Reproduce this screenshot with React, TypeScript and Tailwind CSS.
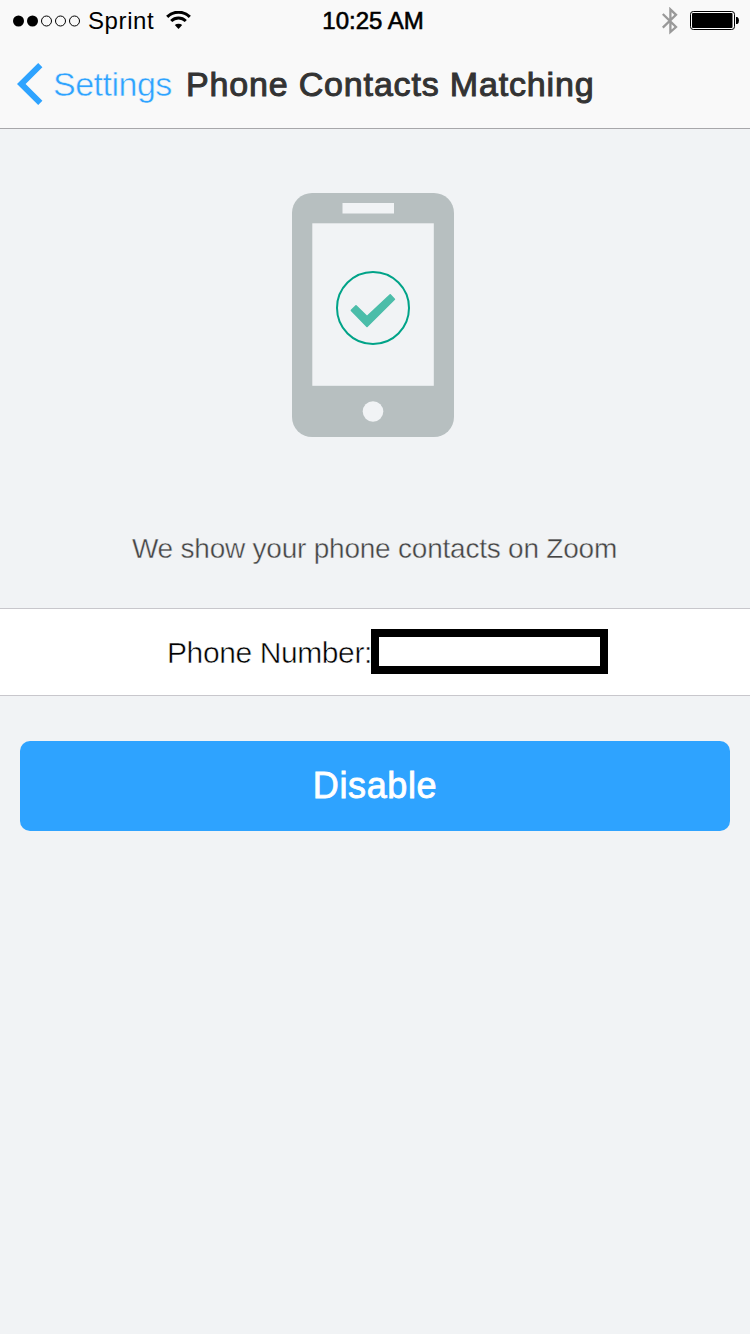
const signal = [true, true, false, false, false];

function SignalDots() {
  return (
    <svg width="68" height="12" viewBox="0 0 68 12" className="mt-px shrink-0">
      {signal.map((on, i) => (
        <circle
          key={i}
          cx={5.5 + i * 14}
          cy="6"
          r={on ? 5.5 : 5}
          fill={on ? '#000' : 'none'}
          stroke={on ? 'none' : '#000'}
          strokeWidth="1"
        />
      ))}
    </svg>
  );
}

function WifiIcon() {
  return (
    <svg width="25" height="18" viewBox="0 0 25 18" className="shrink-0" fill="none" stroke="#000">
      <path d="M1.2 5.9a16 16 0 0 1 22.6 0" strokeWidth="3.1" />
      <path d="M5.2 10.1a10.3 10.3 0 0 1 14.6 0" strokeWidth="2.9" />
      <path d="M8.8 14.1a5.4 5.4 0 0 1 7.4 0L12.5 18z" fill="#000" stroke="none" />
    </svg>
  );
}

function BluetoothIcon() {
  return (
    <svg width="16" height="28" viewBox="0 0 16 28" className="mt-px shrink-0">
      <path d="M.8 7L14 20 8.4 25V2.4L14 7.8.8 20.6" fill="none" stroke="#999" strokeWidth="2.3" />
    </svg>
  );
}

function BatteryIcon() {
  return (
    <svg width="49" height="19" viewBox="0 0 49 19" className="shrink-0">
      <rect x=".5" y=".5" width="44" height="18" rx="2.8" fill="#fff" stroke="#000" />
      <rect x="2" y="2" width="40.5" height="15" rx="1" />
      <path d="M46 6h1.4q1.6 1 1.6 3.5T47.4 13H46z" />
    </svg>
  );
}

function StatusBar() {
  return (
    <div className="grid h-10 grid-cols-3 items-center pl-[13px] pr-[11px] text-2xl leading-[38px] text-black">
      <div className="flex items-center">
        <SignalDots />
        <span className="ml-[7px] pt-[2px] tracking-[0.6px]">Sprint</span>
        <span className="ml-3 flex">
          <WifiIcon />
        </span>
      </div>
      <span className="-ml-1.5 pt-[2px] text-center [-webkit-text-stroke:0.6px_#000]">10:25 AM</span>
      <div className="flex items-center justify-end gap-3">
        <BluetoothIcon />
        <BatteryIcon />
      </div>
    </div>
  );
}

function NavBar() {
  return (
    <nav className="flex h-[88px] items-center text-[34px] leading-[88px]">
      <button className="flex items-center text-[#2ea3ff]">
        <svg width="26" height="42" viewBox="0 0 26 42" className="ml-[17px] shrink-0">
          <path d="M21.2 0l4.2 4.2L8.6 21l16.8 16.8-4.2 4.2L0 21z" fill="#2ea3ff" />
        </svg>
        <span className="ml-[10px] w-[120px] whitespace-nowrap text-left tracking-[-0.5px] [-webkit-text-stroke:0.5px_#f9f9f9]">
          Settings
        </span>
      </button>
      <h1 className="ml-[13px] whitespace-nowrap tracking-[0.83px] text-[#333] [-webkit-text-stroke:1px_#333]">
        Phone Contacts Matching
      </h1>
    </nav>
  );
}

function PhoneCheck() {
  return (
    <svg width="162" height="244" viewBox="0 0 162 244" className="mt-16 ml-[-4px]">
      <rect width="162" height="244" rx="20" fill="#b7bfc0" />
      <rect x="50.5" y="10" width="51.5" height="10.5" fill="#f1f3f5" />
      <rect x="20.3" y="30.3" width="121.5" height="162.5" fill="#f1f3f5" />
      <circle cx="81" cy="218.5" r="10.3" fill="#f1f3f5" />
      <circle cx="81" cy="115" r="36" fill="none" stroke="#00a388" strokeWidth="2" />
      <path
        d="M59.4 117.4l4.6-4.6 11 10.8 23.2-21.8 4.2 4.4L75 133.4z"
        fill="#4bbda9"
        stroke="#4bbda9"
        strokeWidth="1.6"
        strokeLinejoin="round"
      />
    </svg>
  );
}

export default function App() {
  return (
    <div className="flex h-[1334px] w-[750px] flex-col overflow-hidden bg-[#f1f3f5] font-['Liberation_Sans',Arial,sans-serif]">
      <header className="h-[129px] shrink-0 border-b border-[#a7a7aa] bg-[#f9f9f9]">
        <StatusBar />
        <NavBar />
      </header>

      <section className="flex h-[479px] shrink-0 flex-col items-center">
        <PhoneCheck />
        <p className="mt-[92px] -ml-px whitespace-nowrap text-[28px] leading-10 tracking-[-0.22px] text-[#444] [-webkit-text-stroke:0.4px_#f1f3f5]">
          We show your phone contacts on Zoom
        </p>
      </section>

      <div className="flex h-[88px] shrink-0 items-start border-y border-[#c8c7cc] bg-white pt-5 pl-[167px]">
        <span className="w-[204px] whitespace-nowrap text-[30px] leading-[47px] tracking-[-0.4px] text-black [-webkit-text-stroke:0.5px_#fff]">
          Phone Number:
        </span>
        <div className="h-[45px] w-[237px] border-8 border-black bg-white" />
      </div>

      <button className="mx-5 mt-[45px] h-[90px] shrink-0 rounded-[10px] bg-[#2ea3ff] text-4xl tracking-[0.6px] text-white [-webkit-text-stroke:0.8px_#fff]">
        Disable
      </button>
    </div>
  );
}
